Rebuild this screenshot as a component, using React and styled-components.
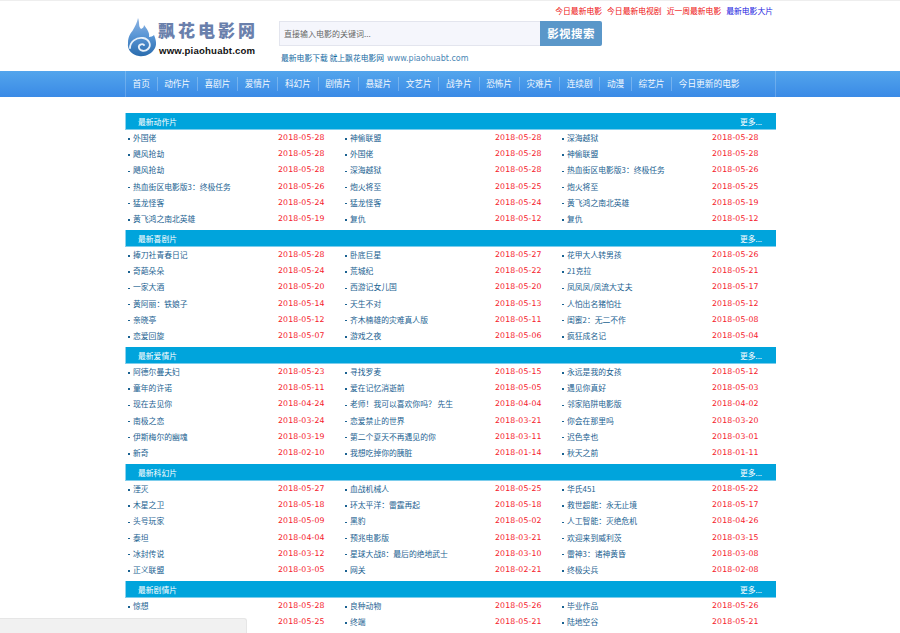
import React from "react";
import styled, { createGlobalStyle } from "styled-components";

const GlobalStyle = createGlobalStyle`
  html, body {
    margin: 0;
    padding: 0;
    height: 100%;
    overflow: hidden;
    background: #fff;
  }
  body {
    border-top: 1px solid #eee;
    box-sizing: border-box;
    font-family: "Noto Sans CJK SC", "Liberation Sans", sans-serif;
    font-size: 7.8px;
  }
  a { text-decoration: none; color: inherit; }
`;

const Wrap = styled.div`
  width: 651px;
  margin-left: 125px;
`;

const Header = styled(Wrap)`
  display: flex;
  height: 70px;
`;

const LogoBox = styled.div`
  width: 154px;
  flex: none;
  display: flex;
  padding: 16px 0 0 2px;
  box-sizing: border-box;
`;

const LogoWords = styled.div`
  display: flex;
  flex-direction: column;
  margin-left: 0;
  padding-top: 3px;
`;

const LogoName = styled.div`
  font-family: "Noto Sans CJK SC", sans-serif;
  font-weight: 900;
  font-size: 17px;
  line-height: 20px;
  letter-spacing: 3px;
  color: #6a80ac;
  white-space: nowrap;
`;

const LogoUrl = styled.div`
  font-family: "Liberation Sans", Arial, sans-serif;
  font-weight: bold;
  font-size: 9.6px;
  line-height: 12px;
  letter-spacing: 0.2px;
  margin: 5px 0 0 1px;
  color: #111;
  white-space: nowrap;
`;

const HeadRight = styled.div`
  flex: 1;
  display: flex;
  flex-direction: column;
`;

const TopLinks = styled.div`
  display: flex;
  justify-content: flex-end;
  gap: 5px;
  height: 20px;
  padding: 4px 3px 0 0;
  box-sizing: border-box;
  line-height: 11px;
`;

const TopLink = styled.a`
  color: ${({ $blue }) => ($blue ? "#1a1ae0" : "#ee1111")};
`;

const SearchRow = styled.form`
  display: flex;
  height: 25px;
  margin: 0;
`;

const SearchInput = styled.div`
  width: 261px;
  box-sizing: border-box;
  background: #f5f6fc;
  border: 1px solid #e3e5ee;
  border-right: 0;
  padding-left: 4px;
  font-size: 8px;
  line-height: 23px;
  color: #666;
`;

const SearchButton = styled.div`
  width: 62px;
  background: #5a97c9;
  border-radius: 0 2px 2px 0;
  text-align: center;
  color: #fff;
  font-weight: bold;
  font-size: 11.5px;
  letter-spacing: 0.4px;
  line-height: 24px;
`;

const Slogan = styled.div`
  margin: 6px 0 0 2px;
  line-height: 12px;
  color: #14699f;
`;

const SloganUrl = styled.span`
  font-family: "DejaVu Sans", sans-serif;
  color: #4a86b4;
  margin-left: 3px;
  font-size: 8px;
`;

const NavBar = styled.nav`
  height: 26px;
  background: linear-gradient(#53a5ec, #3a8ae6);
`;

const NavList = styled(Wrap)`
  display: flex;
  height: 100%;
  border-left: 1px solid rgba(255, 255, 255, 0.2);
  border-right: 1px solid rgba(255, 255, 255, 0.2);
  box-sizing: border-box;
  align-items: center;
`;

const NavItem = styled.a`
  font-size: 8.7px;
  line-height: 14px;
  color: #f2f8fe;
  padding: 0 6.6px;
  white-space: nowrap;
  border-right: ${({ $last }) => ($last ? "0" : "1px solid rgba(255, 255, 255, 0.25)")};
`;

const Main = styled(Wrap)`
  margin-top: 16px;
`;

const Section = styled.section`
  height: 117px;
`;

const SectionHead = styled.div`
  height: 16px;
  display: flex;
  justify-content: space-between;
  align-items: center;
  background: #00a4dc;
  border-bottom: 1px solid #7ccdec;
  border-left: 1px solid #8fd3ee;
  padding: 0 14px 0 12px;
  color: #fff;
`;

const Rows = styled.div`
  display: grid;
  grid-template-columns: repeat(3, 217px);
  grid-auto-rows: 16.2px;
  margin-top: -0.6px;
`;

const Cell = styled.div`
  display: flex;
  align-items: center;
  padding-left: 3px;
`;

const Name = styled.a`
  width: 150px;
  flex: none;
  color: #1a6291;
  white-space: nowrap;
  &::before {
    content: "";
    display: inline-block;
    width: 1.5px;
    height: 1.5px;
    margin-right: 3.5px;
    vertical-align: middle;
    background: #1a6291;
  }
`;

const DateText = styled.span`
  font-family: "DejaVu Sans", sans-serif;
  font-size: 7.8px;
  letter-spacing: 0.14px;
  color: #f51a2c;
`;

const Corner = styled.div`
  position: fixed;
  left: 0;
  bottom: 0;
  width: 246px;
  height: 14px;
  background: #f1f1f1;
  border: 1px solid #e6e6e6;
  border-width: 1px 1px 0 0;
  border-radius: 0 3px 0 0;
`;

const topLinks = ["今日最新电影", "今日最新电视剧", "近一周最新电影"];

const navItems = [
  "首页", "动作片", "喜剧片", "爱情片", "科幻片", "剧情片", "悬疑片", "文艺片",
  "战争片", "恐怖片", "灾难片", "连续剧", "动漫", "综艺片", "今日更新的电影",
];

const sections = [
  {
    title: "最新动作片",
    items: [
      ["外国佬", "2018-05-28"], ["神偷联盟", "2018-05-28"], ["深海越狱", "2018-05-28"],
      ["飓风抢劫", "2018-05-28"], ["外国佬", "2018-05-28"], ["神偷联盟", "2018-05-28"],
      ["飓风抢劫", "2018-05-28"], ["深海越狱", "2018-05-28"], ["热血街区电影版3：终极任务", "2018-05-26"],
      ["热血街区电影版3：终极任务", "2018-05-26"], ["炮火将至", "2018-05-25"], ["炮火将至", "2018-05-25"],
      ["猛龙怪客", "2018-05-24"], ["猛龙怪客", "2018-05-24"], ["黄飞鸿之南北英雄", "2018-05-19"],
      ["黄飞鸿之南北英雄", "2018-05-19"], ["复仇", "2018-05-12"], ["复仇", "2018-05-12"],
    ],
  },
  {
    title: "最新喜剧片",
    items: [
      ["捧刀社青春日记", "2018-05-28"], ["卧底巨星", "2018-05-27"], ["花甲大人转男孩", "2018-05-26"],
      ["奇葩朵朵", "2018-05-24"], ["荒城纪", "2018-05-22"], ["21克拉", "2018-05-21"],
      ["一家大酒", "2018-05-20"], ["西游记女儿国", "2018-05-20"], ["凤凤凤/凤流大丈夫", "2018-05-17"],
      ["黄阿丽：铁娘子", "2018-05-14"], ["天生不对", "2018-05-13"], ["人怕出名猪怕壮", "2018-05-12"],
      ["亲晓亭", "2018-05-12"], ["齐木楠雄的灾难真人版", "2018-05-11"], ["闺蜜2：无二不作", "2018-05-08"],
      ["恋爱回旋", "2018-05-07"], ["游戏之夜", "2018-05-06"], ["疯狂成名记", "2018-05-04"],
    ],
  },
  {
    title: "最新爱情片",
    items: [
      ["阿德尔曼夫妇", "2018-05-23"], ["寻找罗麦", "2018-05-15"], ["永远是我的女孩", "2018-05-12"],
      ["童年的许诺", "2018-05-11"], ["爱在记忆消逝前", "2018-05-05"], ["遇见你真好", "2018-05-03"],
      ["现在去见你", "2018-04-24"], ["老师！我可以喜欢你吗？ 先生", "2018-04-04"], ["邻家陷阱电影版", "2018-04-02"],
      ["南极之恋", "2018-03-24"], ["恋爱禁止的世界", "2018-03-21"], ["你会在那里吗", "2018-03-20"],
      ["伊斯梅尔的幽魂", "2018-03-19"], ["第二个夏天不再遇见的你", "2018-03-11"], ["迟色幸也", "2018-03-01"],
      ["新奇", "2018-02-10"], ["我想吃掉你的胰脏", "2018-01-14"], ["秋天之前", "2018-01-11"],
    ],
  },
  {
    title: "最新科幻片",
    items: [
      ["湮灭", "2018-05-27"], ["血战机械人", "2018-05-25"], ["华氏451", "2018-05-22"],
      ["木星之卫", "2018-05-18"], ["环太平洋：雷霆再起", "2018-05-18"], ["救世超能：永无止境", "2018-05-17"],
      ["头号玩家", "2018-05-09"], ["黑豹", "2018-05-02"], ["人工智能：灭绝危机", "2018-04-26"],
      ["泰坦", "2018-04-04"], ["预兆电影版", "2018-03-21"], ["欢迎来到威利茨", "2018-03-15"],
      ["冰封传说", "2018-03-12"], ["星球大战8：最后的绝地武士", "2018-03-10"], ["雷神3：诸神黄昏", "2018-03-08"],
      ["正义联盟", "2018-03-05"], ["网关", "2018-02-21"], ["终极尖兵", "2018-02-08"],
    ],
  },
  {
    title: "最新剧情片",
    items: [
      ["惊想", "2018-05-28"], ["良种动物", "2018-05-26"], ["毕业作品", "2018-05-26"],
      ["", "2018-05-25"], ["终端", "2018-05-21"], ["陆地空谷", "2018-05-21"],
    ],
  },
];

function Logo() {
  return (
    <svg width="31" height="41" viewBox="0 0 31 41">
      <defs>
        <linearGradient id="flame" x1="0" y1="0" x2="0" y2="1">
          <stop offset="0" stopColor="#8fb4e2" />
          <stop offset="0.45" stopColor="#5b97d6" />
          <stop offset="1" stopColor="#2a6cae" />
        </linearGradient>
      </defs>
      <path
        d="M11 1c2 5 0 8 3 11 2-1 3-2 3-4 3 4 6 8 5 12 2 0 4-1 5-2 2 5 3 9 1 13-3 6-10 9-16 8C5 38 0 33 1 26c0-7 3-10 5-13 2-4 4-7 5-12z"
        fill="url(#flame)"
      />
      <path
        d="M3 31c0-6 6-11 13-10 6 1 9 7 5 11-3 3-8 2-9-1-1-3 3-5 5-3"
        fill="none"
        stroke="#e8f1fa"
        strokeWidth="1.8"
        strokeLinecap="round"
      />
    </svg>
  );
}

function App() {
  return (
    <>
      <GlobalStyle />
      <Header>
        <LogoBox>
          <Logo />
          <LogoWords>
            <LogoName>飘花电影网</LogoName>
            <LogoUrl>www.piaohuabt.com</LogoUrl>
          </LogoWords>
        </LogoBox>
        <HeadRight>
          <TopLinks>
            {topLinks.map((t) => (
              <TopLink href="#" key={t}>{t}</TopLink>
            ))}
            <TopLink href="#" $blue>最新电影大片</TopLink>
          </TopLinks>
          <SearchRow>
            <SearchInput>直接输入电影的关键词...</SearchInput>
            <SearchButton>影视搜索</SearchButton>
          </SearchRow>
          <Slogan>
            最新电影下载 就上飘花电影网<SloganUrl>www.piaohuabt.com</SloganUrl>
          </Slogan>
        </HeadRight>
      </Header>
      <NavBar>
        <NavList>
          {navItems.map((n, i) => (
            <NavItem href="#" key={n} $last={i === navItems.length - 1}>{n}</NavItem>
          ))}
        </NavList>
      </NavBar>
      <Main>
        {sections.map((s) => (
          <Section key={s.title}>
            <SectionHead>
              <span>{s.title}</span>
              <a href="#">更多...</a>
            </SectionHead>
            <Rows>
              {s.items.map(([name, date], i) => (
                <Cell key={i}>
                  <Name href="#">{name}</Name>
                  <DateText>{date}</DateText>
                </Cell>
              ))}
            </Rows>
          </Section>
        ))}
      </Main>
      <Corner />
    </>
  );
}

export default App;
